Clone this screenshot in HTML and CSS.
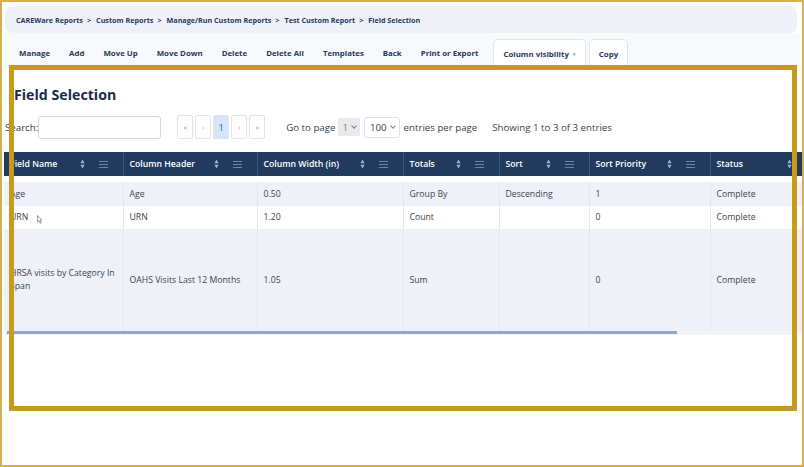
FILE: index.html
```html
<!DOCTYPE html>
<html lang="en">
<head>
  <meta charset="UTF-8" />
  <title>Field Selection</title>
  <link rel="stylesheet" href="styles.css">
</head>
<body>
  <div class="frame">
    <div class="breadcrumb">
      <span>CAREWare Reports</span><span class="sep">&gt;</span>
      <span>Custom Reports</span><span class="sep">&gt;</span>
      <span>Manage/Run Custom Reports</span><span class="sep">&gt;</span>
      <span>Test Custom Report</span><span class="sep">&gt;</span>
      <span>Field Selection</span>
    </div>

    <div class="toolbar">
      <span class="tool">Manage</span>
      <span class="tool">Add</span>
      <span class="tool">Move Up</span>
      <span class="tool">Move Down</span>
      <span class="tool">Delete</span>
      <span class="tool">Delete All</span>
      <span class="tool">Templates</span>
      <span class="tool">Back</span>
      <span class="tool">Print or Export</span>
      <span class="tool tab first-tab">Column visibility <span class="caret">&#9662;</span></span>
      <span class="tool tab">Copy</span>
    </div>

    <div class="content">
      <h1>Field Selection</h1>

      <div class="controls">
        <label class="search">Search:<span class="search-box"></span></label>
        <div class="pager">
          <span class="pg">&laquo;</span>
          <span class="pg">&lsaquo;</span>
          <span class="pg active">1</span>
          <span class="pg">&rsaquo;</span>
          <span class="pg">&raquo;</span>
        </div>
        <span class="goto">Go to page</span>
        <span class="select grey">1 <i class="chev"></i></span>
        <span class="select">100 <i class="chev"></i></span>
        <span class="per">entries per page</span>
        <span class="info">Showing 1 to 3 of 3 entries</span>
      </div>

      <div class="table-wrap">
        <table class="grid">
          <colgroup>
            <col style="width:119px"><col style="width:134px"><col style="width:146px">
            <col style="width:96px"><col style="width:90px"><col style="width:121px"><col style="width:120px">
          </colgroup>
          <thead>
            <tr id="head"></tr>
          </thead>
          <tbody>
            <tr class="odd">
              <td>Age</td><td>Age</td><td>0.50</td><td>Group By</td><td>Descending</td><td>1</td><td>Complete</td>
            </tr>
            <tr>
              <td>URN <svg class="cursor" width="6" height="9" viewBox="0 0 6 9"><path d="M0.5 0.5 L0.5 7 L2 5.6 L3.2 8.3 L4.2 7.8 L3 5.2 L5 5.1 Z" fill="#fff" stroke="#777" stroke-width="0.7"/></svg></td>
              <td>URN</td><td>1.20</td><td>Count</td><td></td><td>0</td><td>Complete</td>
            </tr>
            <tr class="odd tall">
              <td>HRSA visits by Category In Span</td><td>OAHS Visits Last 12 Months</td><td>1.05</td><td>Sum</td><td></td><td>0</td><td>Complete</td>
            </tr>
          </tbody>
        </table>
        <div class="scrollbar"><div class="thumb"></div></div>
      </div>
    </div>

    <div class="highlight"></div>
  </div>

  <script>
    const headers = ['Field Name', 'Column Header', 'Column Width (in)', 'Totals', 'Sort', 'Sort Priority', 'Status'];
    const sortIcon = '<svg class="sort" width="5" height="10" viewBox="0 0 5 10"><path d="M2.5 0.5 L4.6 4.3 L0.4 4.3 Z M2.5 9.5 L4.6 5.7 L0.4 5.7 Z" fill="#9fb3cc"/></svg>';
    const menuIcon = '<svg class="menu" width="9" height="7" viewBox="0 0 9 7"><path d="M0 0.5 H9 M0 3.5 H9 M0 6.5 H9" stroke="#6d86a6" stroke-width="1"/></svg>';
    const head = document.getElementById('head');
    headers.forEach(h => {
      const th = document.createElement('th');
      th.innerHTML = '<span class="th-in"><span class="th-label">' + h + '</span>' + sortIcon + menuIcon + '</span>';
      head.appendChild(th);
    });
  </script>
</body>
</html>
```

FILE: styles.css
```css
body {
  margin: 0;
  background-color: #ffffff;
  font-family: 'Open Sans', 'Noto Sans', sans-serif;
  color: #3d4450;
}

.frame {
  position: relative;
  width: 804px;
  height: 467px;
  box-sizing: border-box;
  border: 2px solid #d6b04c;
  overflow: hidden;
  padding: 4px 2px 0 2px;
}

.breadcrumb {
  display: flex;
  align-items: center;
  height: 27px;
  margin-left: 1px;
  margin-right: 3px;
  padding-left: 11px;
  background-color: #eef2f8;
  border-radius: 7px;
  font-size: 7.2px;
  font-weight: 700;
  color: #1f3a5f;
}

.breadcrumb .sep {
  margin: 0 5px 0 4px;
}

.toolbar {
  display: flex;
  align-items: flex-end;
  height: 35px;
  padding-left: 15px;
  background-color: #f7f9fc;
  font-size: 7.85px;
  font-weight: 700;
  color: #1f3a5f;
}

.tool {
  display: flex;
  align-items: center;
  height: 28px;
  margin-right: 19px;
  padding-bottom: 1px;
}

.tool.tab {
  margin-right: 3px;
  padding: 0 9px;
  background-color: #ffffff;
  border: 1px solid #dfe5ec;
  border-bottom: none;
  border-radius: 5px 5px 0 0;
}

.tool.first-tab {
  margin-left: -4px;
}

.caret {
  font-size: 5px;
  color: #9aa6b4;
  margin-left: 4px;
}

.content {
  background-color: #ffffff;
  padding-top: 17px;
}

h1 {
  margin: 0 0 10px 10px;
  font-size: 14.2px;
  line-height: 20px;
  font-weight: 700;
  color: #1c2b4b;
}

.controls {
  display: flex;
  align-items: center;
  height: 24px;
  font-size: 9.7px;
  color: #3a3f47;
}

.search {
  display: flex;
  align-items: center;
  margin-left: 1px;
}

.search-box {
  display: block;
  width: 121px;
  height: 21px;
  border: 1px solid #d3d9e0;
  border-radius: 3px;
}

.pager {
  display: flex;
  gap: 2px;
  margin-left: 16px;
}

.pg {
  display: flex;
  align-items: center;
  justify-content: center;
  width: 14px;
  height: 22px;
  border: 1px solid #e1e5ea;
  border-radius: 2px;
  font-size: 7px;
  color: #8d96a3;
}

.pg.active {
  background-color: #d6e6f6;
  border-color: #d6e6f6;
  font-size: 9.5px;
  color: #46658c;
}

.goto {
  margin-left: 21px;
}

.select {
  display: flex;
  align-items: center;
  height: 19px;
  margin-left: 4px;
  padding: 0 4px 0 5px;
  border: 1px solid #dde2e8;
  border-radius: 3px;
}

.select.grey {
  height: 16px;
  margin-left: 3px;
  padding: 0 3px;
  background-color: #e7eaee;
  border-color: #e7eaee;
  border-radius: 1px;
  color: #80878f;
}

.chev {
  display: inline-block;
  width: 3px;
  height: 3px;
  margin-left: 4px;
  margin-top: -2px;
  border-right: 1px solid #7a828c;
  border-bottom: 1px solid #7a828c;
  transform: rotate(45deg);
}

.per {
  margin-left: 4px;
}

.info {
  margin-left: 15px;
}

.table-wrap {
  margin-top: 13px;
  width: 830px;
}

.grid {
  table-layout: fixed;
  border-collapse: collapse;
  width: 826px;
  font-size: 8.7px;
}

.grid th {
  height: 24px;
  padding: 0 0 0 6px;
  background-color: #203b5e;
  color: #ffffff;
  font-weight: 600;
  text-align: left;
  border-left: 1px solid #3b5679;
  border-bottom: 6px solid #ffffff;
}

.grid th:first-child {
  border-left: none;
}

.th-in {
  display: flex;
  align-items: center;
}

.th-label {
  flex: 1;
}

.sort {
  margin-right: 14px;
}

.menu {
  margin-right: 15px;
}

.grid td {
  height: 23px;
  padding: 0 4px 0 6px;
  border-left: 1px solid #e3e8ef;
  vertical-align: middle;
  line-height: 13px;
}

.grid td:first-child {
  border-left: none;
}

.grid tr.odd td {
  background-color: #eef2f8;
}

.grid tr:first-child td {
  height: 24px;
}

.grid tr.tall td {
  height: 102px;
}

.cursor {
  margin-left: 6px;
  vertical-align: -4px;
}

.scrollbar {
  width: 797px;
  height: 4px;
  background-color: #f2f4f7;
}

.thumb {
  width: 670px;
  height: 3px;
  margin-left: 3px;
  background-color: #8ea7c6;
}

.highlight {
  position: absolute;
  left: 7px;
  top: 63px;
  width: 778px;
  height: 336px;
  border: 5px solid #c8991a;
}
```
